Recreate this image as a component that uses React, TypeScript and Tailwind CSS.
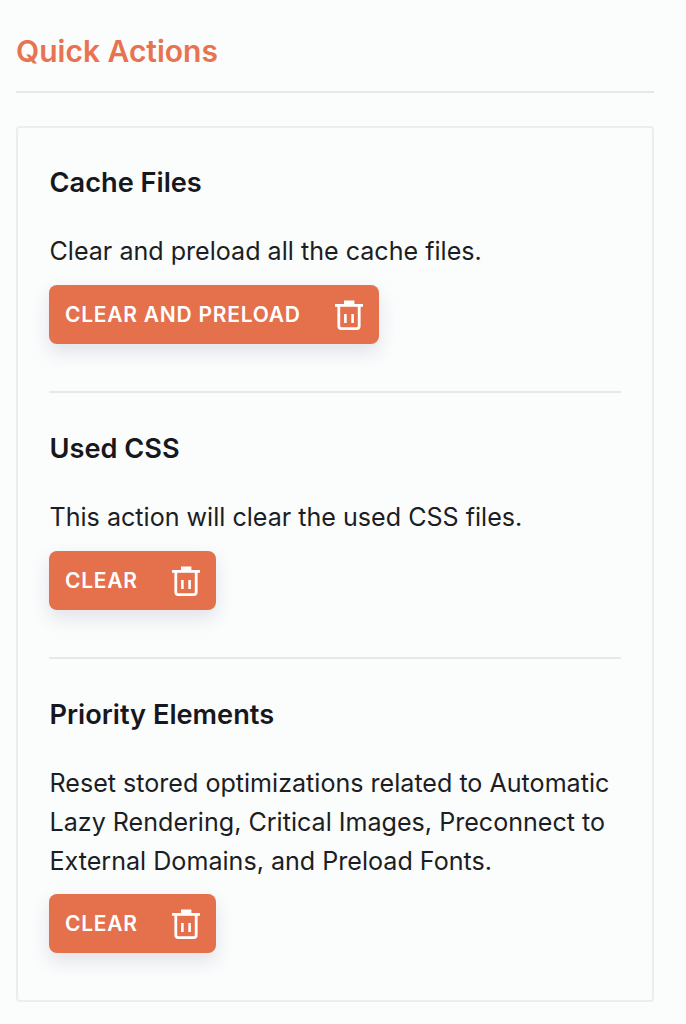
const TrashIcon = () => (
  <svg width="28" height="30" viewBox="0 0 28 30" fill="none" stroke="currentColor" strokeWidth="2.8" className="shrink-0">
    <path d="M0 5.4h28" />
    <path d="M10 4V1.6h8.4V4" fill="currentColor" strokeWidth="2" />
    <path d="M3.8 6v20a2.6 2.6 0 0 0 2.6 2.6h15.2a2.6 2.6 0 0 0 2.6-2.6V6" strokeLinejoin="round" />
    <path d="M10.4 14v9M17.6 14v9" strokeWidth="2.6" />
  </svg>
)

function ActionSection({ title, text, label, last }: { title: string; text: string[]; label: string; last?: boolean }) {
  return (
    <section className={last ? '' : 'mb-[40px] border-b-2 border-[#e7e8ec] pb-[47px]'}>
      <h3 className="pl-[0.5px] text-[27.2px] leading-[32px] font-semibold text-[#16181d]">{title}</h3>
      <p className={`mt-[33px] pl-[0.5px] text-[25.1px] leading-[39px] text-[#1c1e23] ${last ? 'mb-[13px]' : 'mb-[14px]'}`}>
        {text.map((line) => (
          <span key={line} className="block whitespace-nowrap">
            {line}
          </span>
        ))}
      </p>
      <button
        type="button"
        className="flex h-[59px] w-fit items-center gap-[34px] rounded-[8px] bg-[#e5704c] px-[16px] text-[21px] font-semibold tracking-[0.75px] whitespace-nowrap text-white shadow-[0_8px_18px_rgba(60,70,110,0.14)]"
      >
        <span className="pt-[1px]">{label}</span>
        <TrashIcon />
      </button>
    </section>
  )
}

export default function App() {
  return (
    <div className="min-h-[1024px] w-[686px] bg-[#fbfcfc] pt-[32px] pr-[32px] pl-[16px] font-['Inter',sans-serif]">
      <h2 className="border-b-2 border-[#e7e8ec] pb-[21px] text-[30px] leading-[38px] font-semibold text-[#e8734f]">Quick Actions</h2>
      <div className="mt-[33px] h-[876px] rounded-[4px] border-2 border-[#ecedf0] px-[31px] pt-[39px]">
        <ActionSection title="Cache Files" text={['Clear and preload all the cache files.']} label="CLEAR AND PRELOAD" />
        <ActionSection title="Used CSS" text={['This action will clear the used CSS files.']} label="CLEAR" />
        <ActionSection
          title="Priority Elements"
          text={[
            'Reset stored optimizations related to Automatic',
            'Lazy Rendering, Critical Images, Preconnect to',
            'External Domains, and Preload Fonts.',
          ]}
          label="CLEAR"
          last
        />
      </div>
    </div>
  )
}
